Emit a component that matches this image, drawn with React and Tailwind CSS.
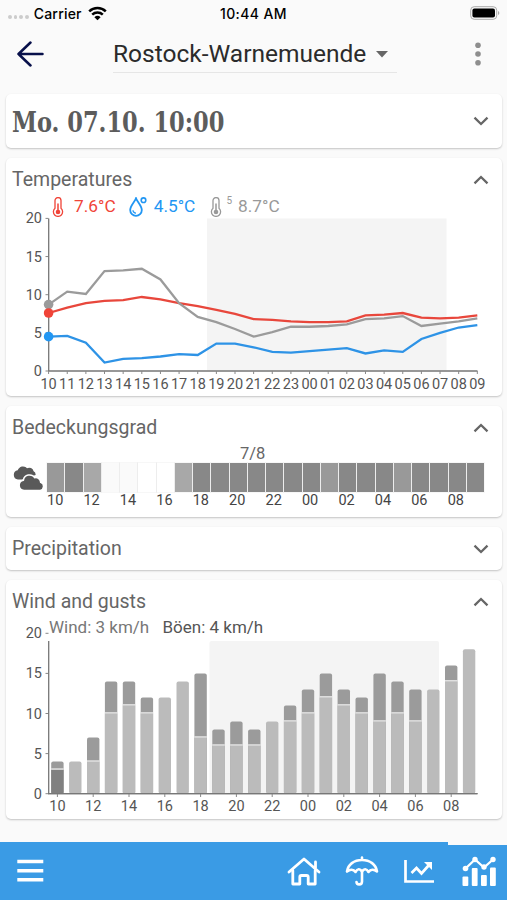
import { useState } from "react";

const HOURS = ["10", "11", "12", "13", "14", "15", "16", "17", "18", "19", "20", "21", "22", "23", "00", "01", "02", "03", "04", "05", "06", "07", "08", "09"];

const TEMPERATURE = [7.6, 8.3, 8.9, 9.2, 9.3, 9.7, 9.4, 8.9, 8.5, 8.0, 7.5, 6.8, 6.7, 6.5, 6.4, 6.4, 6.5, 7.3, 7.4, 7.6, 7.0, 6.9, 7.0, 7.3];
const DEW_POINT = [4.5, 4.6, 3.7, 1.1, 1.6, 1.7, 1.9, 2.2, 2.1, 3.6, 3.6, 3.1, 2.5, 2.4, 2.6, 2.8, 3.0, 2.3, 2.7, 2.5, 4.2, 5.0, 5.7, 6.0];
const GROUND = [8.7, 10.4, 10.1, 13.1, 13.2, 13.4, 12.0, 8.9, 7.1, 6.4, 5.5, 4.5, 5.1, 5.8, 5.8, 5.9, 6.1, 6.8, 6.9, 7.2, 5.9, 6.2, 6.5, 6.9];

const CLOUDS = [7, 8, 6, 1, 1, 0, 0, 6, 8, 8, 8, 8, 8, 8, 8, 7, 8, 8, 8, 7, 8, 8, 8, 8];
const CLOUD_COLORS = {
  0: "bg-white",
  1: "bg-[#fafafa]",
  6: "bg-[#a8a8a8]",
  7: "bg-[#999999]",
  8: "bg-[#888888]",
};

// [wind, gusts] in km/h
const WIND = [
  [3, 4], [4, 4], [4, 7], [10, 14], [11, 14], [10, 12], [12, 12], [14, 14],
  [7, 15], [6, 8], [6, 9], [6, 8], [9, 9], [9, 11], [10, 13], [12, 15],
  [11, 13], [10, 12], [9, 15], [10, 14], [9, 13], [13, 13], [14, 16], [18, 18],
];

function Chevron({ open }) {
  return (
    <svg width="16" height="10" viewBox="0 0 16 10" fill="none" stroke="#666" strokeWidth="2.300">
      <path d={open ? "M1.5 8.3 8 2l6.5 6.3" : "M1.5 1.7 8 8l6.5-6.3"} />
    </svg>
  );
}

function Card({ title, className, defaultOpen = false, children }) {
  const [open, setOpen] = useState(defaultOpen);
  return (
    <section className={`shrink-0 rounded-[5px] bg-white shadow-[0_1px_2px_rgba(0,0,0,0.22)] ${className}`}>
      <button
        onClick={() => setOpen(v => !v)}
        className="flex h-11 w-full items-center justify-between pr-[13px] pl-1.5 text-[19.5px] text-[#666]"
      >
        {title}
        <Chevron open={open} />
      </button>
      {open && children}
    </section>
  );
}

function Thermometer() {
  return (
    <svg width="12" height="20" viewBox="0 0 12 20" fill="none" stroke="currentColor">
      <path d="M3 11.3V3.6a3 3 0 0 1 6 0v7.7a4.6 4.6 0 1 1-6 0Z" strokeWidth="1.3" />
      <path d="M6 6.5V14" strokeWidth="1.5" />
      <circle cx="6" cy="15" r="2.3" fill="currentColor" stroke="none" />
    </svg>
  );
}

function Droplet() {
  return (
    <svg width="18" height="20" viewBox="0 0 18 20" fill="none" stroke="currentColor" strokeWidth="1.8">
      <path d="M7 1.200C5.700 5 1.200 8.600 1.200 13a5.800 5.800 0 0 0 11.600 0C12.800 8.600 8.300 5 7 1.200Z" />
      <path d="M4 13.200a3 3 0 0 0 3 3" strokeWidth="1.300" />
      <circle cx="14.500" cy="3.200" r="2.300" strokeWidth="1.600" />
    </svg>
  );
}

function YAxis({ y, top }) {
  return (
    <g>
      {[0, 5, 10, 15, 20].map(v => (
        <g key={v}>
          <path d={`M39.500 ${y(v)}h3`} stroke="#888" />
          <text x="36" y={y(v) + 5} textAnchor="end">{v}</text>
        </g>
      ))}
      <path d={`M42.700 ${top}V${y(0)}H471.500`} fill="none" stroke="#777" strokeWidth="1.300" />
    </g>
  );
}

function TemperatureChart() {
  const x = i => 42.6 + i * 18.64;
  const y = v => 162 - v * 7.63;
  const points = data => data.map((v, i) => `${x(i)},${y(v)}`).join(" ");
  return (
    <svg width="496" height="187" viewBox="0 0 496 187" className="block overflow-visible" fill="#555" fontSize="14.500">
      <rect x="201" y="9.500" width="239.500" height="152" fill="#f4f4f4" />
      <YAxis y={y} top={y(20)} />
      {HOURS.map((h, i) => (
        <g key={h}>
          <path d={`M${x(i)} 162v3`} stroke="#888" />
          <text x={x(i)} y="179.500" textAnchor="middle">{h}</text>
        </g>
      ))}
      <g fill="none" strokeWidth="2.300">
        <polyline points={points(TEMPERATURE)} stroke="#e8473c" />
        <polyline points={points(GROUND)} stroke="#9b9b9b" />
        <polyline points={points(DEW_POINT)} stroke="#2e93e6" />
      </g>
      <circle cx={x(0)} cy={y(GROUND[0])} r="4.800" fill="#9b9b9b" />
      <circle cx={x(0)} cy={y(TEMPERATURE[0])} r="4.800" fill="#f04438" />
      <circle cx={x(0)} cy={y(DEW_POINT[0])} r="4.800" fill="#2196f3" />
    </svg>
  );
}

function CloudCover() {
  return (
    <div className="flex pt-px pl-1.5">
      <svg width="33" height="28" viewBox="0 0 33 28" className="mt-[13px] shrink-0" fill="#595959">
        <path d="M6 15.500A4.700 4.700 0 0 1 5.700 6.200 5.600 5.600 0 0 1 15 4.200a4.600 4.600 0 0 1 6.600 3A3.800 3.800 0 0 1 23.600 11L10 15.500Z" />
        <path
          d="M12 26.500a5.200 5.200 0 0 1-.6-10.300 6.200 6.200 0 0 1 11.300-2.500 4.900 4.900 0 0 1 6 4.700 4.200 4.200 0 0 1-.5 8.100Z"
          stroke="#fff"
          strokeWidth="1.500"
        />
      </svg>
      <div className="w-[439px] pl-0.5">
        <div className="-mt-[3px] mb-[3px] h-3 pl-[193px] text-[16.500px] leading-3 text-[#666]">7/8</div>
        <div className="flex h-[29px] gap-px bg-[#d8d8d8]/20">
          {CLOUDS.map((c, i) => (
            <div key={i} className={`flex-1 outline outline-[#e5e5e5]/30 ${CLOUD_COLORS[c]}`} />
          ))}
        </div>
        <div className="flex text-[14.500px] leading-[18px] text-[#444]">
          {HOURS.filter((_, i) => i % 2 === 0).map(h => (
            <span key={h} className="flex-1">{h}</span>
          ))}
        </div>
      </div>
    </div>
  );
}

function WindChart() {
  const x = i => 51.4 + i * 17.9;
  const y = v => 175.7 - v * 8.02;
  return (
    <svg width="496" height="196" viewBox="0 0 496 196" className="block overflow-visible" fill="#555" fontSize="14.500">
      <rect x="203.500" y="23" width="229.500" height="152.500" rx="2" fill="#f4f4f4" />
      <YAxis y={y} top={23} />
      <text x="43" y="14.500" fontSize="17" fill="#777">Wind: 3 km/h</text>
      <text x="156.500" y="14.500" fontSize="17" fill="#555">Böen: 4 km/h</text>
      {WIND.map(([wind, gusts], i) => {
        const left = x(i) - 6.2;
        return (
          <g key={i}>
            <rect x={left} y={y(gusts)} width="12.400" height={y(0) - y(gusts)} rx="2" fill={gusts > wind ? "#9b9b9b" : "#bbb"} />
            {gusts > wind && (
              <>
                <rect x={left} y={y(wind)} width="12.400" height={y(0) - y(wind)} fill={i === 0 ? "#808080" : "#bbb"} />
                <rect x={left} y={y(wind) - 1.2} width="12.400" height="1.200" fill="#f4f4f4" />
              </>
            )}
          </g>
        );
      })}
      <path d="M42 175.700H471.500" stroke="#777" strokeWidth="1.300" />
      {HOURS.map((h, i) => i % 2 === 0 && (
        <g key={h}>
          <path d={`M${x(i)} 176v3`} stroke="#888" />
          <text x={x(i)} y="193" textAnchor="middle">{h}</text>
        </g>
      ))}
    </svg>
  );
}

function StatusBar() {
  return (
    <div className="grid h-[26px] grid-cols-3 items-center px-2 font-['Inter',sans-serif] text-[14px] font-medium text-black">
      <div className="flex items-center tracking-[0.2px]">
        <div className="mt-2 mr-[5px] flex gap-[2px]">
          {[0, 1, 2, 3].map(i => <i key={i} className="size-[3.700px] rounded-full bg-[#ccc]" />)}
        </div>
        Carrier
        <svg width="19" height="15" viewBox="0 0 19 15" className="ml-1.5" fill="none" stroke="#000" strokeWidth="2.500">
          <path d="M1.200 5.400a12 12 0 0 1 16.600 0" />
          <path d="M4.200 8.700a7.700 7.700 0 0 1 10.600 0" />
          <path d="M9.500 14.200 6.400 11.200a4.500 4.500 0 0 1 6.200 0Z" fill="#000" stroke="none" />
        </svg>
      </div>
      <div className="text-center tracking-[0.4px]">10:44 AM</div>
      <svg width="30" height="14" viewBox="0 0 30 14" className="-mr-px justify-self-end">
        <rect x=".700" y=".700" width="26" height="12.600" rx="3.500" fill="none" stroke="#aaa" />
        <rect x="2.400" y="2.400" width="22.600" height="9.200" rx="2" fill="#000" />
        <path d="M28 5v4c1.800-.6 1.800-3.400 0-4Z" fill="#aaa" />
      </svg>
    </div>
  );
}

function TopBar() {
  return (
    <header className="flex h-[55px] items-center justify-between pr-[26px] pl-[17px]">
      <button aria-label="Back">
        <svg width="27" height="26" viewBox="0 0 27 26" fill="none" stroke="#08104a" strokeWidth="2.500" strokeLinecap="round" strokeLinejoin="round">
          <path d="M25.500 13H1.500M13.500 1.500 1.500 13l12 11.500" />
        </svg>
      </button>
      <button className="mt-0.5 mr-auto ml-[69px] flex h-[37px] w-[284px] items-center border-b border-[#e6e6e6] text-[24.500px] whitespace-nowrap text-[#2b2b2b]">
        Rostock-Warnemuende
        <svg width="12" height="7" viewBox="0 0 12 7" className="ml-2.5" fill="#666"><path d="M0 0h12L6 6.500Z" /></svg>
      </button>
      <button aria-label="More">
        <svg width="6" height="24" viewBox="0 0 6 24" fill="#8e8e8e">
          <circle cx="3" cy="3.200" r="2.800" /><circle cx="3" cy="12" r="2.800" /><circle cx="3" cy="20.700" r="2.800" />
        </svg>
      </button>
    </header>
  );
}

function BottomNav() {
  return (
    <nav className="relative flex h-[58.500px] items-center bg-[#3a9be5] pr-[11px] pl-[17px] text-white">
      <div className="absolute top-0 right-0 h-[3px] w-[59px] bg-[#fafafa]" />
      <svg width="27" height="24" viewBox="0 0 27 24" stroke="currentColor" strokeWidth="3.500">
        <path d="M.3 2.500h26M.3 11.700h26M.3 20.800h26" />
      </svg>
      <div className="ml-auto flex items-center">
        <svg width="34" height="30" viewBox="0 0 34 30" fill="none" stroke="currentColor" strokeWidth="2.800" strokeLinecap="round" strokeLinejoin="round">
          <path d="M2 16 17 3l15 13M28.500 12V6" />
          <path d="M5.800 14.500V28h7v-7q0-1.500 1.500-1.500h5.400q1.500 0 1.500 1.500v7h7V14.500" />
        </svg>
        <svg width="34" height="30" viewBox="0 0 34 30" className="ml-6" fill="none" stroke="currentColor" strokeWidth="2.600" strokeLinecap="round" strokeLinejoin="round">
          <path d="M17 1.500V4M2 15.500C3 8.500 9 4 17 4s14 4.500 15 11.500c-3-2.500-6.500-2.500-8.500.5-2-3.500-4.500-3.500-6.500-.5-2-3-4.500-3-6.500.5-2-3-5.500-3-8.500-.5Z" />
          <path d="M17 15.500v10c0 4-5.500 3.500-5.500.5" />
        </svg>
        <svg width="31" height="30" viewBox="0 0 31 30" className="ml-6" fill="none" stroke="currentColor" strokeWidth="2.700">
          <path d="M2.500 4v21.500H31M8.500 17l5-5 5 5.500 7.500-8.500" />
          <path d="M21 6h8v8Z" fill="currentColor" stroke="none" />
        </svg>
        <svg width="34" height="32" viewBox="0 0 34 32" className="ml-[28px]" fill="currentColor">
          <path d="M3.500 13.500 13 4.500l9 8 9-8" fill="none" stroke="currentColor" strokeWidth="2.300" />
          <circle cx="3.500" cy="13.500" r="2.800" /><circle cx="13" cy="4.500" r="2.700" /><circle cx="22" cy="12" r="2.700" /><circle cx="31" cy="4.500" r="2.700" />
          <rect x=".500" y="21.500" width="5.800" height="9.500" rx="1" />
          <rect x="9.800" y="13" width="5.800" height="18" rx="1" />
          <rect x="19" y="20" width="5.800" height="11" rx="1" />
          <rect x="28" y="12.500" width="5.800" height="18.500" rx="1" />
        </svg>
      </div>
    </nav>
  );
}

export default function App() {
  return (
    <div className="flex h-[900px] w-[507px] flex-col overflow-hidden bg-[#fafafa] font-['Roboto',sans-serif]">
      <StatusBar />
      <TopBar />
      <main className="flex flex-1 flex-col gap-2.5 pt-[13px] pr-[5px] pl-1.5">
        <section className="flex h-[54px] shrink-0 items-center justify-between rounded-[5px] bg-white pr-[13px] pl-1.5 shadow-[0_1px_2px_rgba(0,0,0,0.22)]">
          <h1 className="mt-[3px] origin-left scale-x-[0.819] font-['DejaVu_Serif',serif] text-[27.500px] font-bold whitespace-nowrap text-[#5c5c5c]">
            Mo. 07.10. 10:00
          </h1>
          <Chevron open={false} />
        </section>

        <Card title="Temperatures" defaultOpen className="h-[238px]">
          <div className="flex h-[7px] items-center pt-0.5 pl-[46px] text-[17.300px]">
            <div className="flex items-center gap-2.5 text-[#f04438]"><Thermometer />7.6°C</div>
            <div className="ml-[13px] flex items-center gap-[7px] text-[#2196f3]"><Droplet />4.5°C</div>
            <div className="ml-[15px] flex items-center text-[#999]">
              <Thermometer />
              <span className="mb-3 ml-1 text-[10px]">5</span>
              <span className="ml-1.5">8.7°C</span>
            </div>
          </div>
          <TemperatureChart />
        </Card>

        <Card title="Bedeckungsgrad" defaultOpen className="h-[111px]">
          <CloudCover />
        </Card>

        <Card title="Precipitation" className="h-[43px]" />

        <Card title="Wind and gusts" defaultOpen className="h-[239px]">
          <div className="-mt-[6px]"><WindChart /></div>
        </Card>
      </main>
      <BottomNav />
    </div>
  );
}
